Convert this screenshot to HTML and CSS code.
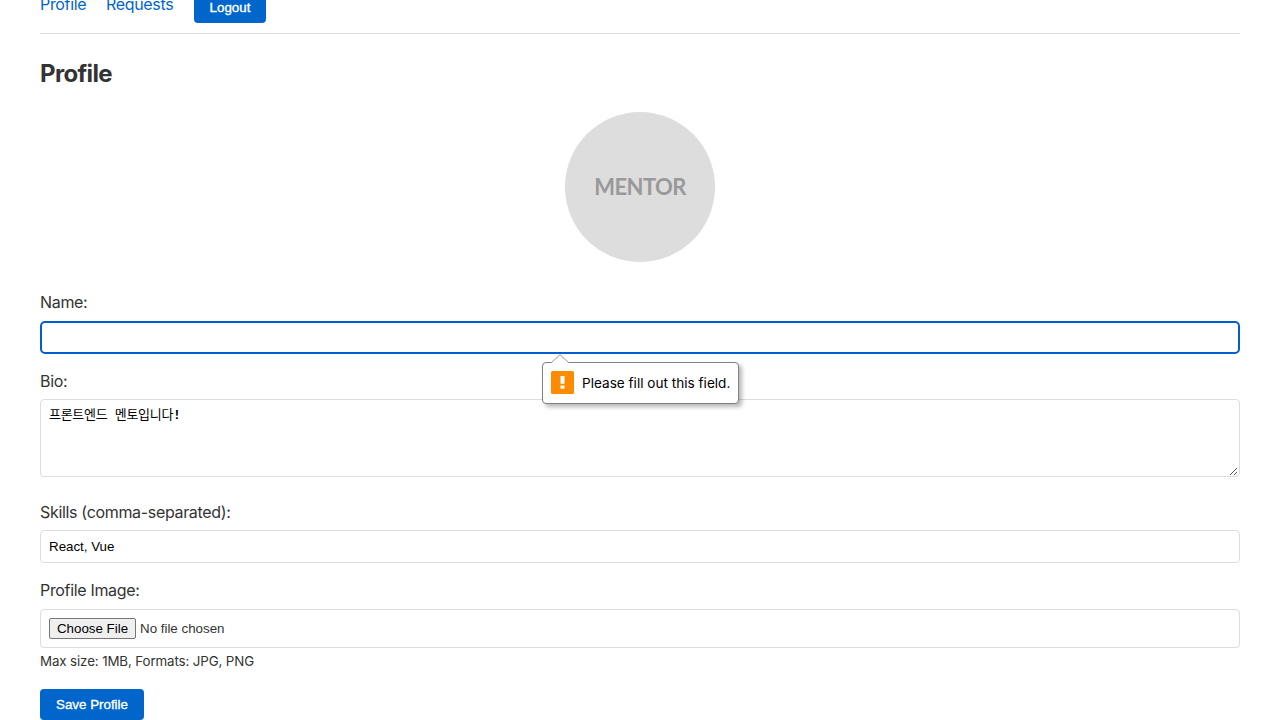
FILE: index.html
```html
<!DOCTYPE html>
<html lang="en">
<head>
<meta charset="utf-8">
<title>Profile</title>
<link rel="stylesheet" href="styles.css">
</head>
<body>
<nav class="nav">
  <a class="link" href="#">Profile</a>
  <a class="link requests" href="#">Requests</a>
  <button class="button logout" type="button">Logout</button>
</nav>
<main>
  <h2 class="title">Profile</h2>
  <div class="avatar"><span>MENTOR</span></div>
  <form class="form">
    <label class="label" for="name">Name:</label>
    <div class="name-wrap">
      <input class="field name" id="name" type="text">
      <div class="tooltip">
        <svg class="arrow" width="18" height="9" viewBox="0 0 18 9"><path d="M0 9 L9 .7 L18 9" fill="#fff" stroke="#999" stroke-width="1"/></svg>
        <svg class="warn" width="23" height="23" viewBox="0 0 23 23"><rect width="23" height="23" rx="1.5" fill="#ff8c00"/><path d="M9.5 5h4v7.8h-4zM9.5 14.6h4v3.2h-4z" fill="#fff"/></svg>
        <span class="tooltip-text">Please fill out this field.</span>
      </div>
    </div>
    <label class="label tight" for="bio">Bio:</label>
    <div class="field bio" id="bio"><span class="bio-text">프론트엔드 멘토입니다<b>!</b></span>
      <svg class="grip" width="8" height="8" viewBox="0 0 8 8" shape-rendering="crispEdges"><path d="M0 7h1v1H0zM1 6h1v1H1zM2 5h1v1H2zM3 4h1v1H3zM4 3h1v1H4zM5 2h1v1H5zM6 1h1v1H6zM4 7h1v1H4zM5 6h1v1H5zM6 5h1v1H6z" fill="#555"/></svg>
    </div>
    <label class="label tight" for="skills">Skills (comma-separated):</label>
    <input class="field skills" id="skills" type="text" value="React, Vue">
    <div class="label">Profile Image:</div>
    <div class="field file"><button class="choose" type="button">Choose File</button><span class="file-status">No file chosen</span></div>
    <small class="hint">Max size: 1MB, Formats: JPG, PNG</small>
    <button class="button save" type="button">Save Profile</button>
  </form>
</main>
</body>
</html>
```
FILE: styles.css
```css
* { box-sizing: border-box; }
html { overflow: hidden; }
body {
  margin: 0;
  padding: 0 40px;
  height: 720px;
  overflow: hidden;
  background: #fff;
  color: #333;
  font-family: Inter, "Noto Sans CJK KR", sans-serif;
  font-size: 16px;
}
.nav {
  display: flex;
  align-items: flex-start;
  height: 42px;
  margin-top: -8px;
  border-bottom: 1px solid #ddd;
}
.link {
  color: #0066cc;
  text-decoration: none;
  line-height: 24px;
  width: 46px;
  margin-right: 20px;
  white-space: nowrap;
  letter-spacing: -.33px;
}
.requests { width: 68px; }
.button {
  height: 31px;
  padding: 0;
  border: 0;
  border-radius: 4px;
  background: #0066cc;
  color: #fff;
  font: 13.333px "Liberation Sans", sans-serif;
  -webkit-text-stroke: .35px #fff;
}
.logout { width: 72px; }
.title {
  margin: 25px 0 23px;
  font-size: 24px;
  line-height: 30px;
  font-weight: 700;
  letter-spacing: -.66px;
}
.avatar {
  display: flex;
  align-items: center;
  justify-content: center;
  width: 150px;
  height: 150px;
  margin: 0 auto 28px;
  padding-bottom: 1px;
  border-radius: 50%;
  background: #ddd;
  color: #999;
  font: 700 22px Lato, sans-serif;
  letter-spacing: -.6px;
}
.form { display: flex; flex-direction: column; align-items: flex-start; }
.label {
  display: block;
  height: 26px;
  margin-bottom: 5px;
  line-height: 25px;
  letter-spacing: -.33px;
}
.tight { margin-bottom: 4px; }
.field {
  display: block;
  width: 100%;
  margin: 0;
  padding: 0 8px;
  border: 1px solid #ddd;
  border-radius: 4px;
  background: #fff;
  color: #000;
  font: 13.333px "Liberation Sans", sans-serif;
}
.name-wrap { position: relative; width: 100%; margin-bottom: 15px; }
.name { height: 33px; border: 2px solid #005fcc; outline: 0; border-radius: 5px; }
.bio { position: relative; height: 78px; margin-bottom: 23px; padding: 8px; }
.bio-text { display: block; font: 13px/15px "Liberation Mono", "Noto Sans CJK KR", monospace; letter-spacing: -.3px; }
.grip { position: absolute; right: 1px; bottom: 1px; }
.skills { height: 33px; margin-bottom: 15px; }
.file { display: flex; align-items: center; height: 39px; }
.choose {
  width: 87px;
  height: 21px;
  padding: 0;
  border: 1px solid #767676;
  border-radius: 2px;
  background: #efefef;
  color: #000;
  font: 13.333px "Liberation Sans", sans-serif;
}
.file-status { margin-left: 4px; color: #333; }
.hint { height: 26px; line-height: 27px; margin-bottom: 15px; font-size: 13.333px; letter-spacing: -.12px; white-space: nowrap; }
.tooltip {
  position: absolute;
  z-index: 2;
  left: 502px;
  top: 41px;
  display: flex;
  align-items: center;
  width: 197px;
  height: 42px;
  padding-left: 9px;
  border: 1px solid #808080;
  border-radius: 4px;
  background: #fff;
  box-shadow: 3px 3px 4px rgba(0,0,0,.28);
  color: #000;
  font-size: 13.6px;
  white-space: nowrap;
}
.arrow { position: absolute; left: 8px; top: -9px; }
.warn { flex: none; margin: -1px 8px 0 -1px; }
.save { width: 104px; }
```
